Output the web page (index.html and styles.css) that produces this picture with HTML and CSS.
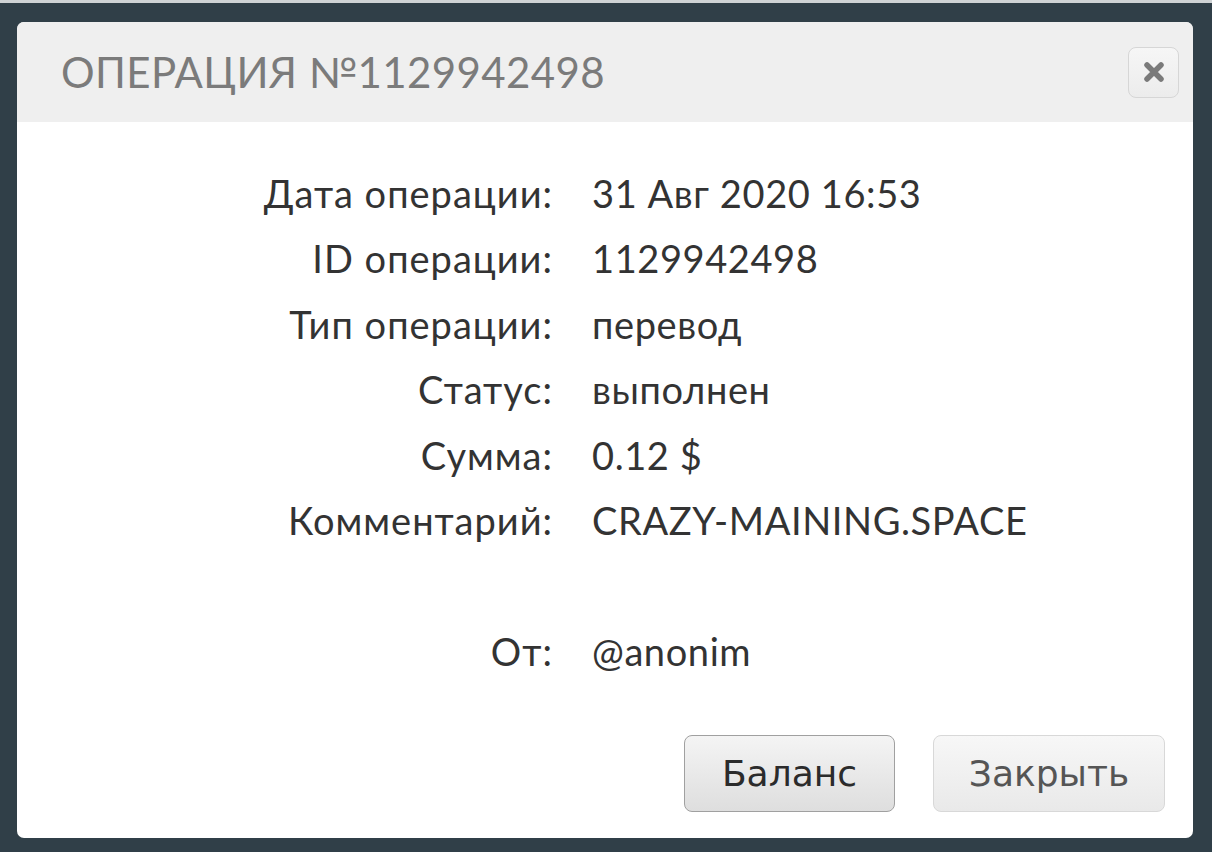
FILE: index.html
```html
<!DOCTYPE html>
<html lang="ru">
<head>
  <meta charset="UTF-8" />
  <title>Операция №1129942498</title>
  <link rel="stylesheet" href="styles.css">
</head>
<body>
  <div class="dialog">
    <div class="dialog-header">
      <h1>Операция №1129942498</h1>
      <button class="close-btn" title="Закрыть">
        <svg width="22" height="22" viewBox="0 0 22 22">
          <path d="M4 4 L18 18 M18 4 L4 18" stroke="#7a7a7a" stroke-width="5.5" stroke-linecap="round" />
        </svg>
      </button>
    </div>

    <div class="details">
      <div class="label">Дата операции:</div>
      <div class="value">31 Авг 2020 16:53</div>

      <div class="label">ID операции:</div>
      <div class="value">1129942498</div>

      <div class="label">Тип операции:</div>
      <div class="value">перевод</div>

      <div class="label">Статус:</div>
      <div class="value">выполнен</div>

      <div class="label">Сумма:</div>
      <div class="value">0.12 $</div>

      <div class="label">Комментарий:</div>
      <div class="value">CRAZY-MAINING.SPACE</div>

      <div class="spacer"></div>

      <div class="label">От:</div>
      <div class="value">@anonim</div>
    </div>

    <div class="actions">
      <button class="btn btn-primary">Баланс</button>
      <button class="btn">Закрыть</button>
    </div>
  </div>
</body>
</html>
```

FILE: styles.css
```css
* {
  margin: 0;
  padding: 0;
  box-sizing: border-box;
}

body {
  background: #303f48;
  border-top: 3px solid #cfd3d5;
  height: 852px;
  overflow: hidden;
  padding: 19px 19px 0 17px;
  font-family: 'Lato', 'Open Sans', sans-serif;
}

.dialog {
  background: #fff;
  border-radius: 7px;
  height: 816px;
  display: flex;
  flex-direction: column;
  overflow: hidden;
}

.dialog-header {
  background: #efefef;
  height: 100px;
  display: flex;
  align-items: center;
  justify-content: space-between;
  padding: 0 14px 0 44px;
}

.dialog-header h1 {
  font-family: 'Lato', sans-serif;
  font-weight: normal;
  font-size: 42px;
  letter-spacing: 0.4px;
  text-transform: uppercase;
  color: #7b7b7b;
}

.close-btn {
  width: 51px;
  height: 51px;
  border: 1px solid #d6d6d6;
  border-radius: 8px;
  background: linear-gradient(#f6f6f6, #ececec);
  display: flex;
  align-items: center;
  justify-content: center;
  cursor: pointer;
}

.details {
  display: grid;
  grid-template-columns: 536px auto;
  column-gap: 39px;
  grid-auto-rows: 65.5px;
  align-items: center;
  padding-top: 38px;
  font-size: 38px;
  letter-spacing: 1px;
  color: #333;
}

.label {
  text-align: right;
}

.value {
  letter-spacing: 0.6px;
}

.spacer {
  grid-column: 1 / 3;
}

.actions {
  margin-top: auto;
  display: flex;
  justify-content: flex-end;
  gap: 38px;
  padding: 0 28px 26px 0;
}

.btn {
  height: 77px;
  width: 232px;
  border: 1px solid #d8d8d8;
  border-radius: 8px;
  background: linear-gradient(#f7f7f7, #e9e9e9);
  font-family: 'DejaVu Sans', sans-serif;
  font-size: 36px;
  color: #555;
  cursor: pointer;
}

.btn-primary {
  width: 211px;
  border-color: #a0a0a0;
  background: linear-gradient(#f4f4f4, #dedede);
  color: #2b2b2b;
}
```
